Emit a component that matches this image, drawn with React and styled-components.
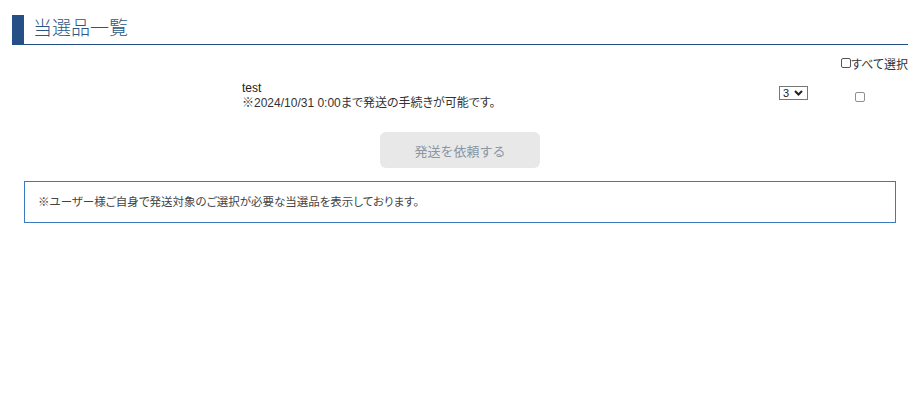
import React from 'react'
import styled, { createGlobalStyle } from 'styled-components'

const GlobalStyle = createGlobalStyle`
  html, body {
    margin: 0;
    padding: 0;
    background: #fff;
  }
  body {
    font-family: "Liberation Sans", "Noto Sans CJK JP", sans-serif;
    font-feature-settings: "palt";
    color: #333;
  }
`

const Page = styled.div`
  width: 896px;
  margin: 15px 16px 0 12px;
`

const Heading = styled.h2`
  margin: 0;
  height: 29px;
  border-left: 12px solid #245085;
  border-bottom: 1px solid #245085;
  padding-left: 9px;
  font-size: 19px;
  font-weight: 300;
  line-height: 28px;
  color: #2a5684;
`

const SelectAll = styled.label`
  display: flex;
  justify-content: flex-end;
  align-items: center;
  margin-top: 9px;
  height: 18px;
  font-size: 12px;
  color: #333;
`

const Check = styled.input.attrs({ type: 'checkbox' })`
  appearance: none;
  margin: 0;
  width: 10px;
  height: 10px;
  box-sizing: border-box;
  border: 1px solid ${p => (p.$dark ? '#555' : '#8f8f8f')};
  border-radius: 2px;
  background: #fff;
`

const ItemRow = styled.div`
  display: grid;
  grid-template-columns: 218px 1fr auto 80px;
  column-gap: 12px;
  align-items: center;
  margin-top: 9px;
  padding-right: 8px;
`

const ItemText = styled.div`
  font-size: 12px;
  line-height: 15px;
  color: #333;
`

const ItemName = styled.div`
  color: #222;
`

const SelectWrap = styled.span`
  position: relative;
  display: inline-block;
  width: 29px;
  height: 14px;
  margin-top: -6px;

  svg {
    position: absolute;
    right: 5px;
    top: 4px;
    pointer-events: none;
  }
`

const Select = styled.select`
  appearance: none;
  display: block;
  width: 29px;
  height: 14px;
  margin: 0;
  box-sizing: border-box;
  border: 1px solid #767676;
  border-radius: 0;
  padding: 0 0 0 3px;
  background: #fff;
  font-family: inherit;
  font-size: 11px;
  line-height: 12px;
  color: #222;
`

const CheckCell = styled.div`
  display: flex;
  justify-content: center;
  padding-top: 1px;
`

const ButtonRow = styled.div`
  display: flex;
  justify-content: center;
  margin-top: 21px;
`

const SendButton = styled.button`
  width: 160px;
  height: 36px;
  border: none;
  border-radius: 6px;
  background: #e8e8e8;
  color: #8c95a3;
  font-family: inherit;
  font-size: 13px;
  cursor: default;
`

const Notice = styled.div`
  margin: 13px 12px 0;
  border: 1px solid #3a7bbf;
  padding: 11px 13px;
  font-size: 11.5px;
  line-height: 18px;
  color: #444;
`

export default function App() {
  return (
    <>
      <GlobalStyle />
      <Page>
        <Heading>当選品一覧</Heading>

        <SelectAll>
          <Check $dark />
          すべて選択
        </SelectAll>

        <ItemRow>
          <div />
          <ItemText>
            <ItemName>test</ItemName>
            ※2024/10/31 0:00まで発送の手続きが可能です。
          </ItemText>
          <SelectWrap>
            <Select defaultValue="3">
              <option value="1">1</option>
              <option value="2">2</option>
              <option value="3">3</option>
            </Select>
            <svg width="9" height="6" viewBox="0 0 9 6">
              <path d="M1 1l3.5 3.5L8 1" fill="none" stroke="#222" strokeWidth="2" />
            </svg>
          </SelectWrap>
          <CheckCell>
            <Check />
          </CheckCell>
        </ItemRow>

        <ButtonRow>
          <SendButton disabled>発送を依頼する</SendButton>
        </ButtonRow>

        <Notice>※ユーザー様ご自身で発送対象のご選択が必要な当選品を表示しております。</Notice>
      </Page>
    </>
  )
}
